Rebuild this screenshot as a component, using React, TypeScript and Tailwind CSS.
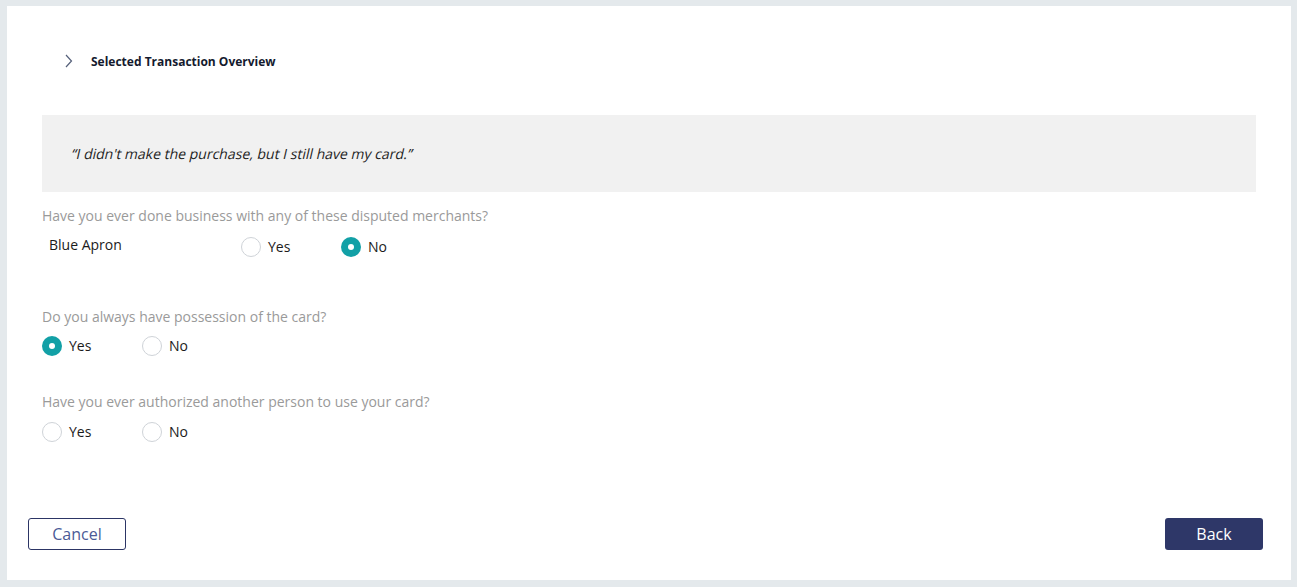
import React from "react";

function Radio({ checked, label }: { checked: boolean; label: string }) {
  return (
    <div className="flex items-center">
      {checked ? (
        <span className="flex h-[20px] w-[20px] items-center justify-center rounded-full bg-[#12a0a6]">
          <span className="h-[6px] w-[6px] rounded-full bg-white" />
        </span>
      ) : (
        <span className="h-[20px] w-[20px] rounded-full border border-[#cfd3d8] bg-white" />
      )}
      <span className="ml-[7px] text-[14px] text-[#1b1b1b]">{label}</span>
    </div>
  );
}

export default function App() {
  return (
    <div
      className="h-[587px] w-[1297px] bg-[#e4e9ec] pl-[7px] pr-[6px] pt-[6px] pb-[7px]"
      style={{ fontFamily: "'Open Sans', 'Liberation Sans', sans-serif" }}
    >
      <div className="relative flex h-full flex-col bg-white">
        <div className="flex h-[109px] items-start pl-[58px] pt-[47px]">
          <svg width="8" height="14" viewBox="0 0 8 14" className="mt-[1px]">
            <path d="M1 1 L6.5 7 L1 13" fill="none" stroke="#55607a" strokeWidth="1.2" />
          </svg>
          <span className="ml-[18px] text-[12px] font-bold leading-[18px] text-[#141a2e]">
            Selected Transaction Overview
          </span>
        </div>
        <div className="mx-[35px] flex h-[77px] items-center bg-[#f1f1f1] pl-[30px]">
          <span className="inline-block skew-x-[-13deg] text-[14px] text-[#1e1e1e]">
            “I didn't make the purchase, but I still have my card.”
          </span>
        </div>
        <div className="pl-[35px]">
          <div className="mt-[14px] text-[14px] leading-[20px] text-[#9a9a9a]">
            Have you ever done business with any of these disputed merchants?
          </div>
          <div className="mt-[10px] flex items-center">
            <span className="ml-[7px] w-[191px] text-[14px] text-[#1b1b1b] -mt-[4px]">Blue Apron</span>
            <div className="w-[100px] pl-[1px]">
              <Radio checked={false} label="Yes" />
            </div>
            <div className="pl-[1px]">
              <Radio checked={true} label="No" />
            </div>
          </div>
          <div className="mt-[50px] text-[14px] leading-[20px] text-[#9a9a9a]">
            Do you always have possession of the card?
          </div>
          <div className="mt-[8px] flex items-center">
            <div className="w-[100px]">
              <Radio checked={true} label="Yes" />
            </div>
            <Radio checked={false} label="No" />
          </div>
          <div className="mt-[36px] text-[14px] leading-[20px] text-[#9a9a9a]">
            Have you ever authorized another person to use your card?
          </div>
          <div className="mt-[9px] flex items-center">
            <div className="w-[100px]">
              <Radio checked={false} label="Yes" />
            </div>
            <Radio checked={false} label="No" />
          </div>
        </div>
        <div className="mt-auto mb-[30px] flex justify-between pl-[21px] pr-[28px]">
          <button className="h-[32px] w-[98px] rounded-[3px] border border-[#2c3565] bg-white text-[16px] text-[#4b5a96]">
            Cancel
          </button>
          <button className="h-[32px] w-[98px] rounded-[3px] bg-[#2e3768] text-[16px] text-white">
            Back
          </button>
        </div>
      </div>
    </div>
  );
}
